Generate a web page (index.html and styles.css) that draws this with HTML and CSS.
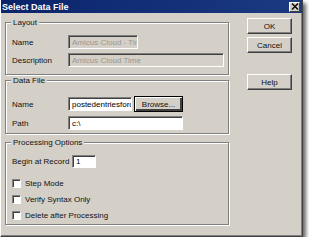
FILE: index.html
```html
<!DOCTYPE html>
<html>
  <head>
    <title>Select Data File</title>
    <link rel="stylesheet" href="styles.css">
  </head>
  <body>
    <div class="dialog">
      <div class="titlebar">
        <span class="title">Select Data File</span>
        <span class="close" title="Close">
          <svg width="8" height="7" viewBox="0 0 8 7">
            <path d="M1 0.5 L7 6.5 M7 0.5 L1 6.5" stroke="#000" stroke-width="1.4"/>
          </svg>
        </span>
      </div>

      <div class="content">
        <div class="main">
          <div class="group layout">
            <span class="legend">Layout</span>
            <div class="row">
              <label>Name</label>
              <input class="field short" type="text" value="Amicus Cloud - Time" disabled>
            </div>
            <div class="row">
              <label>Description</label>
              <input class="field wide" type="text" value="Amicus Cloud Time" disabled>
            </div>
          </div>

          <div class="group datafile">
            <span class="legend">Data File</span>
            <div class="row">
              <label>Name</label>
              <input class="field file" type="text" value="postedentriesforcasting">
              <button class="btn default">Browse...</button>
            </div>
            <div class="row">
              <label>Path</label>
              <input class="field path" type="text" value="c:\">
            </div>
          </div>

          <div class="group processing">
            <span class="legend">Processing Options</span>
            <div class="row">
              <label class="begin">Begin at Record</label>
              <input class="field record" type="text" value="1">
            </div>
            <div class="checks">
              <label class="check"><input type="checkbox"> Step Mode</label>
              <label class="check"><input type="checkbox"> Verify Syntax Only</label>
              <label class="check"><input type="checkbox"> Delete after Processing</label>
            </div>
          </div>
        </div>

        <div class="side">
          <button class="btn">OK</button>
          <button class="btn">Cancel</button>
          <button class="btn help">Help</button>
        </div>
      </div>
    </div>
  </body>
</html>
```

FILE: styles.css
```css
body {
  margin: 0;
  background-color: #fff;
  font-family: "Liberation Sans", Arial, sans-serif;
  font-size: 8px;
  color: #111;
}
.dialog {
  width: 301px;
  height: 236px;
  background-color: #d4d0c8;
  border-left: 1px solid #fff;
  border-right: 1px solid #404040;
  border-bottom: 1px solid #404040;
  box-shadow: 3px 3px 4px rgba(0, 0, 0, 0.6), inset -1px -1px 0 #808080;
}
.titlebar {
  height: 13px;
  display: flex;
  align-items: center;
  justify-content: space-between;
  padding: 0 2px 0 1px;
  background: linear-gradient(to right, #0a246a, #1b3a80);
}
.title {
  color: #fff;
  font-weight: bold;
  font-size: 9px;
}
.close {
  width: 11px;
  height: 10px;
  display: flex;
  align-items: center;
  justify-content: center;
  background-color: #d4d0c8;
  border: 1px solid;
  border-color: #fff #404040 #404040 #fff;
  box-sizing: border-box;
}
.content {
  display: flex;
  padding: 9px 0 0 4px;
}
.main {
  width: 224px;
  display: flex;
  flex-direction: column;
}
.group {
  position: relative;
  box-sizing: border-box;
  border: 1px solid #808080;
  box-shadow: 1px 1px 0 #fff, inset 1px 1px 0 #fff;
  padding: 12px 0 0 6px;
}
.legend {
  position: absolute;
  top: -5px;
  left: 5px;
  padding: 0 2px;
  line-height: 9px;
  background-color: #d4d0c8;
}
.layout {
  height: 53px;
}
.datafile {
  height: 54px;
  margin-top: 5px;
  padding-top: 15px;
}
.processing {
  height: 83px;
  margin-top: 8px;
}
.row {
  display: flex;
  align-items: center;
  margin-bottom: 4px;
}
.row label {
  width: 56px;
}
.row label.begin {
  width: 60px;
}
.field {
  box-sizing: border-box;
  height: 14px;
  margin: 0;
  padding: 0 0 0 3px;
  font-family: "Liberation Sans", Arial, sans-serif;
  font-size: 8px;
  color: #000;
  background-color: #fff;
  border: 1px solid;
  border-color: #808080 #fff #fff #808080;
  box-shadow: inset 1px 1px 0 #404040;
  outline: none;
}
.field:disabled {
  background-color: #d4d0c8;
  color: #9a978f;
}
.short {
  width: 70px;
}
.wide {
  width: 156px;
}
.file {
  width: 64px;
}
.path {
  width: 115px;
}
.record {
  width: 24px;
  height: 13px;
}
.btn {
  box-sizing: border-box;
  width: 45px;
  height: 16px;
  margin: 0;
  padding: 0;
  font-family: "Liberation Sans", Arial, sans-serif;
  font-size: 8px;
  color: #111;
  background-color: #d4d0c8;
  border: 1px solid;
  border-color: #fff #404040 #404040 #fff;
  box-shadow: inset -1px -1px 0 #808080;
}
.btn.default {
  width: 49px;
  margin-left: 2px;
  border-color: #000;
  box-shadow: inset 1px 1px 0 #fff, inset -2px -2px 0 #404040, inset -1px -1px 0 #808080;
}
.checks {
  display: flex;
  flex-direction: column;
  gap: 6px;
  margin-top: 10px;
}
.check {
  display: flex;
  align-items: center;
  gap: 4px;
  height: 10px;
}
.check input {
  appearance: none;
  box-sizing: border-box;
  width: 9px;
  height: 9px;
  margin: 0;
  background-color: #fff;
  border: 1px solid;
  border-color: #808080 #fff #fff #808080;
  box-shadow: inset 1px 1px 0 #404040;
}
.side {
  display: flex;
  flex-direction: column;
  gap: 3px;
  margin-top: -4px;
  margin-left: 18px;
}
.side .help {
  margin-top: 18px;
}
```
